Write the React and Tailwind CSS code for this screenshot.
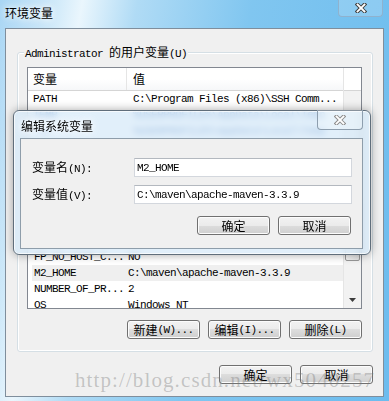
import React from "react";

const mono = "font-['Liberation_Mono','Noto_Sans_CJK_SC',monospace] text-[11px] tracking-[-0.6px] leading-[14px] whitespace-pre";
const cjk = "font-['Noto_Sans_CJK_SC',sans-serif] text-[12px] tracking-normal";

// SimSun-like mix: half-width latin, full-width CJK
const Mixed = ({ text }) =>
  text
    .split(/([\u4e00-\u9fff]+)/)
    .filter(Boolean)
    .map((part, i) =>
      /[\u4e00-\u9fff]/.test(part) ? (
        <span key={i} className={cjk}>
          {part}
        </span>
      ) : (
        <span key={i}>{part}</span>
      )
    );

const CloseX = ({ dark }) => (
  <svg width="12" height="10" viewBox="0 0 12 10">
    <path d="M2.5 1.5 L9.5 8.5 M9.5 1.5 L2.5 8.5" stroke={dark ? "#3f3f3f" : "#8c8c8c"} strokeWidth="3.8" strokeLinecap="square" fill="none" />
    <path d="M2.5 1.5 L9.5 8.5 M9.5 1.5 L2.5 8.5" stroke="#ffffff" strokeWidth="1.8" strokeLinecap="square" fill="none" />
  </svg>
);

const Btn = ({ label }) => (
  <div className={`w-[73px] h-[19px] rounded-[3px] border border-[#707070] bg-[linear-gradient(#f2f2f2,#ebebeb_50%,#dddddd_50%,#cfcfcf)] shadow-[inset_0_0_0_1px_#fcfcfc] flex items-center justify-center text-black ${mono}`}>
    <Mixed text={label} />
  </div>
);

const TopRow = ({ name, value, className = "" }) => (
  <div className={`h-[16px] shrink-0 flex items-center ${mono} ${className}`}>
    <div className="w-[105px] pl-[5px] overflow-hidden">{name}</div>
    <div>{value}</div>
  </div>
);

const SysRow = ({ name, value, selected }) => (
  <div className={`h-[16px] shrink-0 ml-[4px] flex items-center ${mono} ${selected ? "bg-[#efefef]" : ""}`}>
    <div className="w-[96px] pl-[2px] overflow-hidden">{name}</div>
    <div>{value}</div>
  </div>
);

const App = () => {
  return (
    <div className="relative w-[389px] h-[401px] overflow-hidden bg-[linear-gradient(100deg,#a9d6f4_0%,#cfe9f9_12%,#eaf6fd_18%,#b0dbf5_30%,#80c6f0_55%,#6cbcee_100%)] text-black select-none">
      {/* title bar */}
      <div className={`h-[28px] pl-[5px] pt-[5px] leading-[16px] ${cjk} [text-shadow:0_0_6px_#fff,0_0_10px_#fff]`}>
        环境变量
      </div>
      <div className="absolute top-0 right-[6px] w-[45px] h-[17px] rounded-b-[4px] border border-t-0 border-[#8fb2ce] bg-[rgba(255,255,255,0.18)] flex items-center justify-center">
        <CloseX dark />
      </div>

      {/* client area */}
      <div className="ml-[5px] w-[379px] h-[369px] border border-[#7f8e9c] bg-[#f0f0f0] flex flex-col">
        <div className="relative ml-[11px] mt-[23px] w-[356px] h-[300px] shrink-0 border border-[#d5dfe5] rounded-[3px] shadow-[inset_0_0_0_1px_#ffffff] flex flex-col">
          <div className={`absolute left-[6px] top-[-8px] px-[1px] bg-[#f0f0f0] ${mono}`}>
            <Mixed text="Administrator 的用户变量(U)" />
          </div>

          {/* variable list */}
          <div className="ml-[9px] mt-[14px] w-[335px] h-[242px] shrink-0 border border-[#828790] bg-white flex overflow-hidden">
            <div className="w-[315px] flex flex-col overflow-hidden">
              <div className="h-[23px] shrink-0 flex border-b border-[#d5d5d5] bg-[linear-gradient(#ffffff,#ffffff_50%,#f6f7f9)]">
                <div className={`w-[99px] pl-[5px] border-r border-[#e5e5e5] flex items-center ${cjk}`}>变量</div>
                <div className={`pl-[6px] flex items-center ${cjk}`}>值</div>
              </div>
              <TopRow name="PATH" value={"C:\\Program Files (x86)\\SSH Comm..."} />
              <TopRow name="TEMP" value={"%USERPROFILE%\\AppData\\Local\\Temp"} className="text-[#3f74bb]" />
              <TopRow name="TMP" value={"%USERPROFILE%\\AppData\\Local\\Temp"} className="text-[#3f74bb]" />
              <div className="h-[110px] shrink-0" />
              <SysRow name="FP_NO_HOST_C..." value="NO" />
              <SysRow name="M2_HOME" value={"C:\\maven\\apache-maven-3.3.9"} selected />
              <SysRow name="NUMBER_OF_PR..." value="2" />
              <SysRow name="OS" value="Windows_NT" />
            </div>
            <div className="w-[18px] border-l border-[#e5e5e5] bg-[#f2f2f2] flex flex-col">
              <div className="h-[23px] shrink-0 border-b border-[#d5d5d5] bg-white" />
              <div className="h-[109px] shrink-0" />
              <div className="h-[61px] shrink-0 mx-[1px] rounded-[2px] border border-[#979797] bg-[linear-gradient(90deg,#f4f4f4,#e1e1e1)]" />
              <div className="flex-1" />
              <div className="h-[17px] shrink-0 flex items-center justify-center">
                <svg width="7" height="4" viewBox="0 0 7 4">
                  <path d="M0 0 H7 L3.5 4 Z" fill="#3c3c3c" />
                </svg>
              </div>
            </div>
          </div>

          <div className="mt-[11px] pr-[10px] flex justify-end gap-[8px]">
            <Btn label="新建(W)..." />
            <Btn label="编辑(I)..." />
            <Btn label="删除(L)" />
          </div>
        </div>

        <div className="mt-[13px] pr-[10px] flex justify-end gap-[8px]">
          <Btn label="确定" />
          <Btn label="取消" />
        </div>
      </div>

      {/* edit dialog */}
      <div className="absolute left-[13px] top-[110px] w-[358px] h-[145px] rounded-[6px] border border-[#606e7b] bg-[rgba(214,233,248,0.72)] backdrop-blur-[3px] shadow-[0_0_10px_rgba(0,0,0,0.35),inset_0_0_0_1px_rgba(255,255,255,0.7)]">
        <div className={`h-[27px] pl-[7px] pt-[7px] leading-[16px] ${cjk} [text-shadow:0_0_6px_#fff,0_0_10px_#fff]`}>
          编辑系统变量
        </div>
        <div className="absolute top-[-1px] right-[7px] w-[46px] h-[20px] rounded-b-[4px] border border-t-0 border-[#8d9eae] bg-[rgba(255,255,255,0.25)] flex items-center justify-center">
          <CloseX />
        </div>
        <div className="ml-[6px] w-[343px] h-[111px] border border-[#8e9daa] bg-[#f0f0f0] pt-[19px] flex flex-col gap-[8px]">
          <div className={`pl-[11px] flex items-center ${mono}`}>
            <div className="w-[102px]">
              <Mixed text="变量名(N):" />
            </div>
            <div className="w-[218px] h-[19px] border border-[#d3d7dd] border-t-[#b3b8bf] bg-white pl-[2px] flex items-center">M2_HOME</div>
          </div>
          <div className={`pl-[11px] flex items-center ${mono}`}>
            <div className="w-[102px]">
              <Mixed text="变量值(V):" />
            </div>
            <div className="w-[218px] h-[19px] border border-[#d3d7dd] border-t-[#b3b8bf] bg-white pl-[2px] flex items-center">
              {"C:\\maven\\apache-maven-3.3.9"}
            </div>
          </div>
          <div className="mt-[4px] pr-[11px] flex justify-end gap-[8px]">
            <Btn label="确定" />
            <Btn label="取消" />
          </div>
        </div>
      </div>

      {/* watermark */}
      <div className="absolute left-[75px] top-[370px] pointer-events-none font-['Liberation_Serif',serif] text-[21px] leading-[21px] tracking-[1.1px] text-[rgba(120,120,120,0.38)] whitespace-nowrap">
        http://blog.csdn.net/wx5040257
      </div>
    </div>
  );
};

export default App;
